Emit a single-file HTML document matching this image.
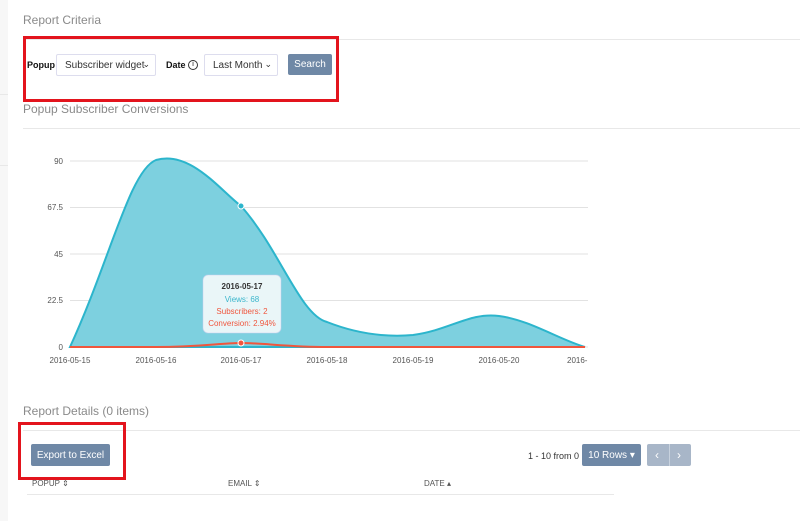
<!DOCTYPE html>
<html><head><style>
*{box-sizing:border-box}
body{margin:0;width:800px;height:521px;background:#fff;font-family:"Liberation Sans",sans-serif;position:relative;overflow:hidden}
.a{position:absolute}
.h{color:#8a8a8a;font-size:12px}
.line{height:1px;background:#e8e8e8}
.sel{border:1px solid #dde;border-radius:2px;font-size:10px;color:#333;height:22px;display:flex;align-items:center;padding-left:8px;background:#fff}
.btn{background:#6f88a6;color:#fff;font-size:10px;border-radius:2px;display:flex;align-items:center;justify-content:center}
</style></head><body>
<div class="a" style="left:0;top:0;width:8px;height:521px;background:#f7f7f7"></div>
<div class="a line" style="left:0;top:94px;width:8px"></div>
<div class="a line" style="left:0;top:165px;width:8px"></div>
<div class="a h" style="left:23px;top:13px">Report Criteria</div>
<div class="a line" style="left:23px;top:39px;width:777px"></div>
<div class="a" style="left:23px;top:36px;width:316px;height:66px;border:3px solid #e3141d"></div>
<div class="a" style="left:27px;top:60px;font-size:9px;font-weight:bold;color:#111">Popup</div>
<div class="a sel" style="left:56px;top:54px;width:100px">Subscriber widget<span style="position:absolute;right:5px;top:4px;font-size:9px">⌄</span></div>
<div class="a" style="left:166px;top:60px;font-size:9px;font-weight:bold;color:#111">Date</div>
<div class="a" style="left:188px;top:60px;width:10px;height:10px;border:1px solid #333;border-radius:50%;font-size:7px;text-align:center;line-height:8px">i</div>
<div class="a sel" style="left:204px;top:54px;width:74px">Last Month<span style="position:absolute;right:5px;top:4px;font-size:9px">⌄</span></div>
<div class="a btn" style="left:288px;top:54px;width:44px;height:21px">Search</div>
<div class="a h" style="left:23px;top:102px">Popup Subscriber Conversions</div>
<div class="a line" style="left:23px;top:128px;width:777px"></div>
<svg class="a" style="left:0;top:140px" width="800" height="230">
<g stroke="#e2e2e2" stroke-width="1">
<line x1="70" y1="21" x2="588" y2="21"/><line x1="70" y1="67.5" x2="588" y2="67.5"/><line x1="70" y1="114" x2="588" y2="114"/><line x1="70" y1="160.5" x2="588" y2="160.5"/><line x1="70" y1="207" x2="588" y2="207"/></g>
<path d="M70,207 C110,120 130,30 156,20 C190,10 220,50 241,66 C280,110 300,175 327,182 C360,195 390,197 413,195 C450,190 470,172 499,176 C530,180 560,200 585,207 Z" fill="#7dd0df" stroke="#2cb5cc" stroke-width="2"/>
<path d="M70,207 L156,207 C200,207 220,203 241,203 C262,203 290,207 327,207 L585,207" fill="none" stroke="#f0563d" stroke-width="2"/>
<circle cx="241" cy="66" r="3" fill="#2cb5cc" stroke="#fff"/>
<circle cx="241" cy="203" r="3" fill="#f0563d" stroke="#fff"/>
<g font-size="8" fill="#555" font-family="Liberation Sans">
<text x="63" y="24" text-anchor="end">90</text><text x="63" y="70" text-anchor="end">67.5</text><text x="63" y="117" text-anchor="end">45</text><text x="63" y="163" text-anchor="end">22.5</text><text x="63" y="210" text-anchor="end">0</text>
<text x="70" y="223" text-anchor="middle">2016-05-15</text><text x="156" y="223" text-anchor="middle">2016-05-16</text><text x="241" y="223" text-anchor="middle">2016-05-17</text><text x="327" y="223" text-anchor="middle">2016-05-18</text><text x="413" y="223" text-anchor="middle">2016-05-19</text><text x="499" y="223" text-anchor="middle">2016-05-20</text><text x="567" y="223">2016-</text></g>
<rect x="203" y="135" width="78" height="58" rx="5" fill="#eaf6f8" stroke="#cce" stroke-opacity=".5"/>
<g font-size="8" font-family="Liberation Sans" text-anchor="middle"><text x="242" y="149" font-weight="bold" fill="#333">2016-05-17</text><text x="242" y="162" fill="#3bb6cc">Views: 68</text><text x="242" y="174" fill="#f0563d">Subscribers: 2</text><text x="242" y="186" fill="#f0563d">Conversion: 2.94%</text></g>
</svg>
<div class="a h" style="left:23px;top:404px">Report Details (0 items)</div>
<div class="a line" style="left:23px;top:430px;width:777px"></div>
<div class="a" style="left:18px;top:422px;width:108px;height:58px;border:3px solid #e3141d"></div>
<div class="a btn" style="left:31px;top:444px;width:79px;height:22px">Export to Excel</div>
<div class="a" style="left:528px;top:451px;font-size:9px;color:#333">1 - 10 from 0</div>
<div class="a btn" style="left:582px;top:444px;width:59px;height:22px">10 Rows ▾</div>
<div class="a" style="left:647px;top:444px;width:44px;height:22px;background:#a8b6c8;border-radius:2px;color:#fff;font-size:12px;line-height:22px"><span style="position:absolute;left:8px">‹</span><span style="position:absolute;left:22px;top:0;width:1px;height:22px;background:#c8d2de"></span><span style="position:absolute;left:30px">›</span></div>
<div class="a" style="left:32px;top:479px;font-size:8px;color:#555">POPUP ⇕</div>
<div class="a" style="left:228px;top:479px;font-size:8px;color:#555">EMAIL ⇕</div>
<div class="a" style="left:424px;top:479px;font-size:8px;color:#555">DATE ▴</div>
<div class="a line" style="left:27px;top:494px;width:587px"></div>
</body></html>
